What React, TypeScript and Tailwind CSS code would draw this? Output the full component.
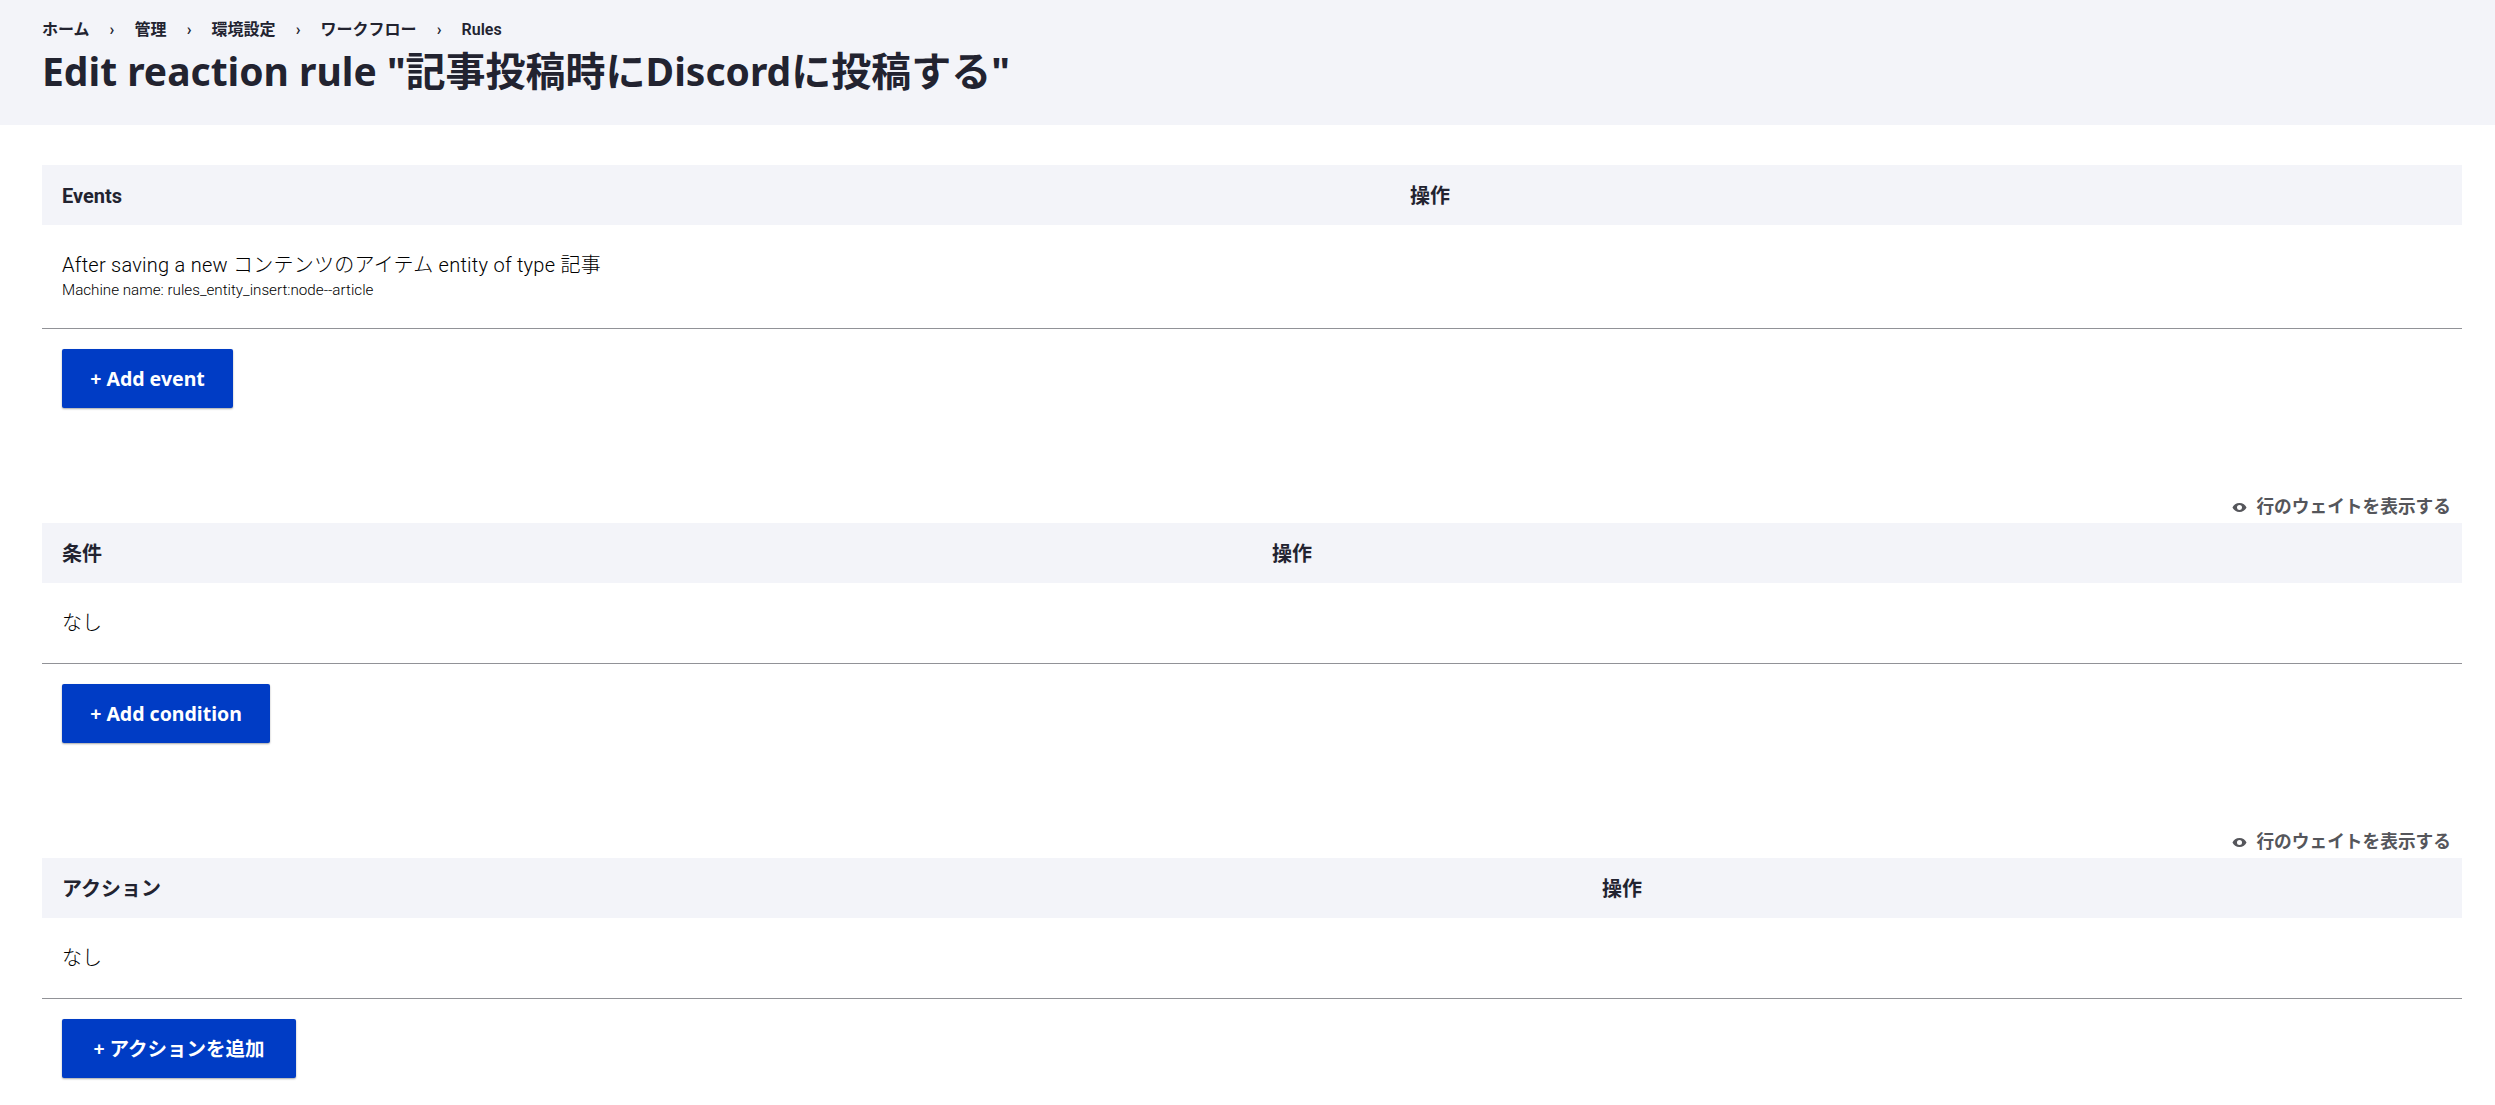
import React from 'react';

const FONT = 'font-["Roboto","Noto_Sans_CJK_JP",sans-serif]';
const NOTO = 'font-["Noto_Sans","Noto_Sans_CJK_JP",sans-serif]';

const crumbs = ['ホーム', '管理', '環境設定', 'ワークフロー', 'Rules'];

const WeightToggle: React.FC = () => (
  <div className="flex justify-end items-center h-[32px] pr-[11px] gap-[9px] text-[17.7px] font-semibold text-[#55565b]">
    <svg width="15" height="9" viewBox="0 0 16 10" aria-hidden="true">
      <path
        fillRule="evenodd"
        fill="#55565b"
        d="M8 0C4.3 0 1.4 2.4 0.2 5 1.4 7.6 4.3 10 8 10s6.6-2.4 7.8-5C14.6 2.4 11.7 0 8 0zm0 2.2a2.8 2.8 0 1 1 0 5.6 2.8 2.8 0 0 1 0-5.6z"
      />
    </svg>
    <span>行のウェイトを表示する</span>
  </div>
);

type RuleTableProps = {
  heading: string;
  opOffset: string;
  button: string;
  buttonWidth: string;
  children: React.ReactNode;
  rowHeight: string;
};

const RuleTable: React.FC<RuleTableProps> = ({ heading, opOffset, button, buttonWidth, children, rowHeight }) => (
  <section>
    <div className="flex items-center h-[60px] bg-[#f3f4f9] text-[20px] font-bold text-[#222330]">
      <div className={`pl-5 pt-[1px] ${opOffset}`}>{heading}</div>
      <div className="pt-[1px]">操作</div>
    </div>
    <div className={`flex flex-col justify-center pl-5 border-b border-[#919297] text-black font-light ${rowHeight}`}>
      {children}
    </div>
    <div className="pl-5 pt-5">
      <button className={`block h-[59px] ${buttonWidth} ${NOTO} bg-[#003cc5] rounded-[2px] shadow-[0_1px_2px_rgba(0,0,0,0.35)] text-white text-[19.5px] font-bold`}>
        {button}
      </button>
    </div>
  </section>
);

export default function App() {
  return (
    <div className={`${FONT} bg-white h-[1105px] overflow-hidden`}>
      <header className="h-[125px] bg-[#f3f4f9] px-[42px] pt-[19px]">
        <ol className="flex items-center h-[22px] text-[16px] font-semibold text-[#222330]">
          {crumbs.map((c, i) => (
            <li key={c} className="flex items-center">
              {i > 0 && <span className="w-[45px] text-center text-[16px]">›</span>}
              <span>{c}</span>
            </li>
          ))}
        </ol>
        <h1 className={`${NOTO} mt-[5px] text-[39px] leading-[50px] font-bold text-[#222330]`}>
          Edit reaction rule "<span className="text-[40px]">記事投稿時に</span>Discord<span className="text-[40px]">に投稿する</span>"
        </h1>
      </header>

      <main className="pr-[33px] pl-[42px]">
        <div className="pt-10">
          <RuleTable
            heading="Events"
            opOffset="w-[1368px]"
            button="+ Add event"
            buttonWidth="w-[171px]"
            rowHeight="h-[104px]"
          >
            <div className="text-[20px] leading-[27px] tracking-[0.25px]">After saving a new コンテンツのアイテム entity of type 記事</div>
            <div className="text-[15.2px] leading-[22px]">Machine name: rules_entity_insert:node--article</div>
          </RuleTable>
        </div>

        <div className="pt-[83px]">
          <WeightToggle />
          <RuleTable
            heading="条件"
            opOffset="w-[1230px]"
            button="+ Add condition"
            buttonWidth="w-[208px]"
            rowHeight="h-[81px]"
          >
            <div className="text-[20px] leading-[28px]">なし</div>
          </RuleTable>
        </div>

        <div className="pt-[83px]">
          <WeightToggle />
          <RuleTable
            heading="アクション"
            opOffset="w-[1560px]"
            button="+ アクションを追加"
            buttonWidth="w-[234px]"
            rowHeight="h-[81px]"
          >
            <div className="text-[20px] leading-[28px]">なし</div>
          </RuleTable>
        </div>
      </main>
    </div>
  );
}
